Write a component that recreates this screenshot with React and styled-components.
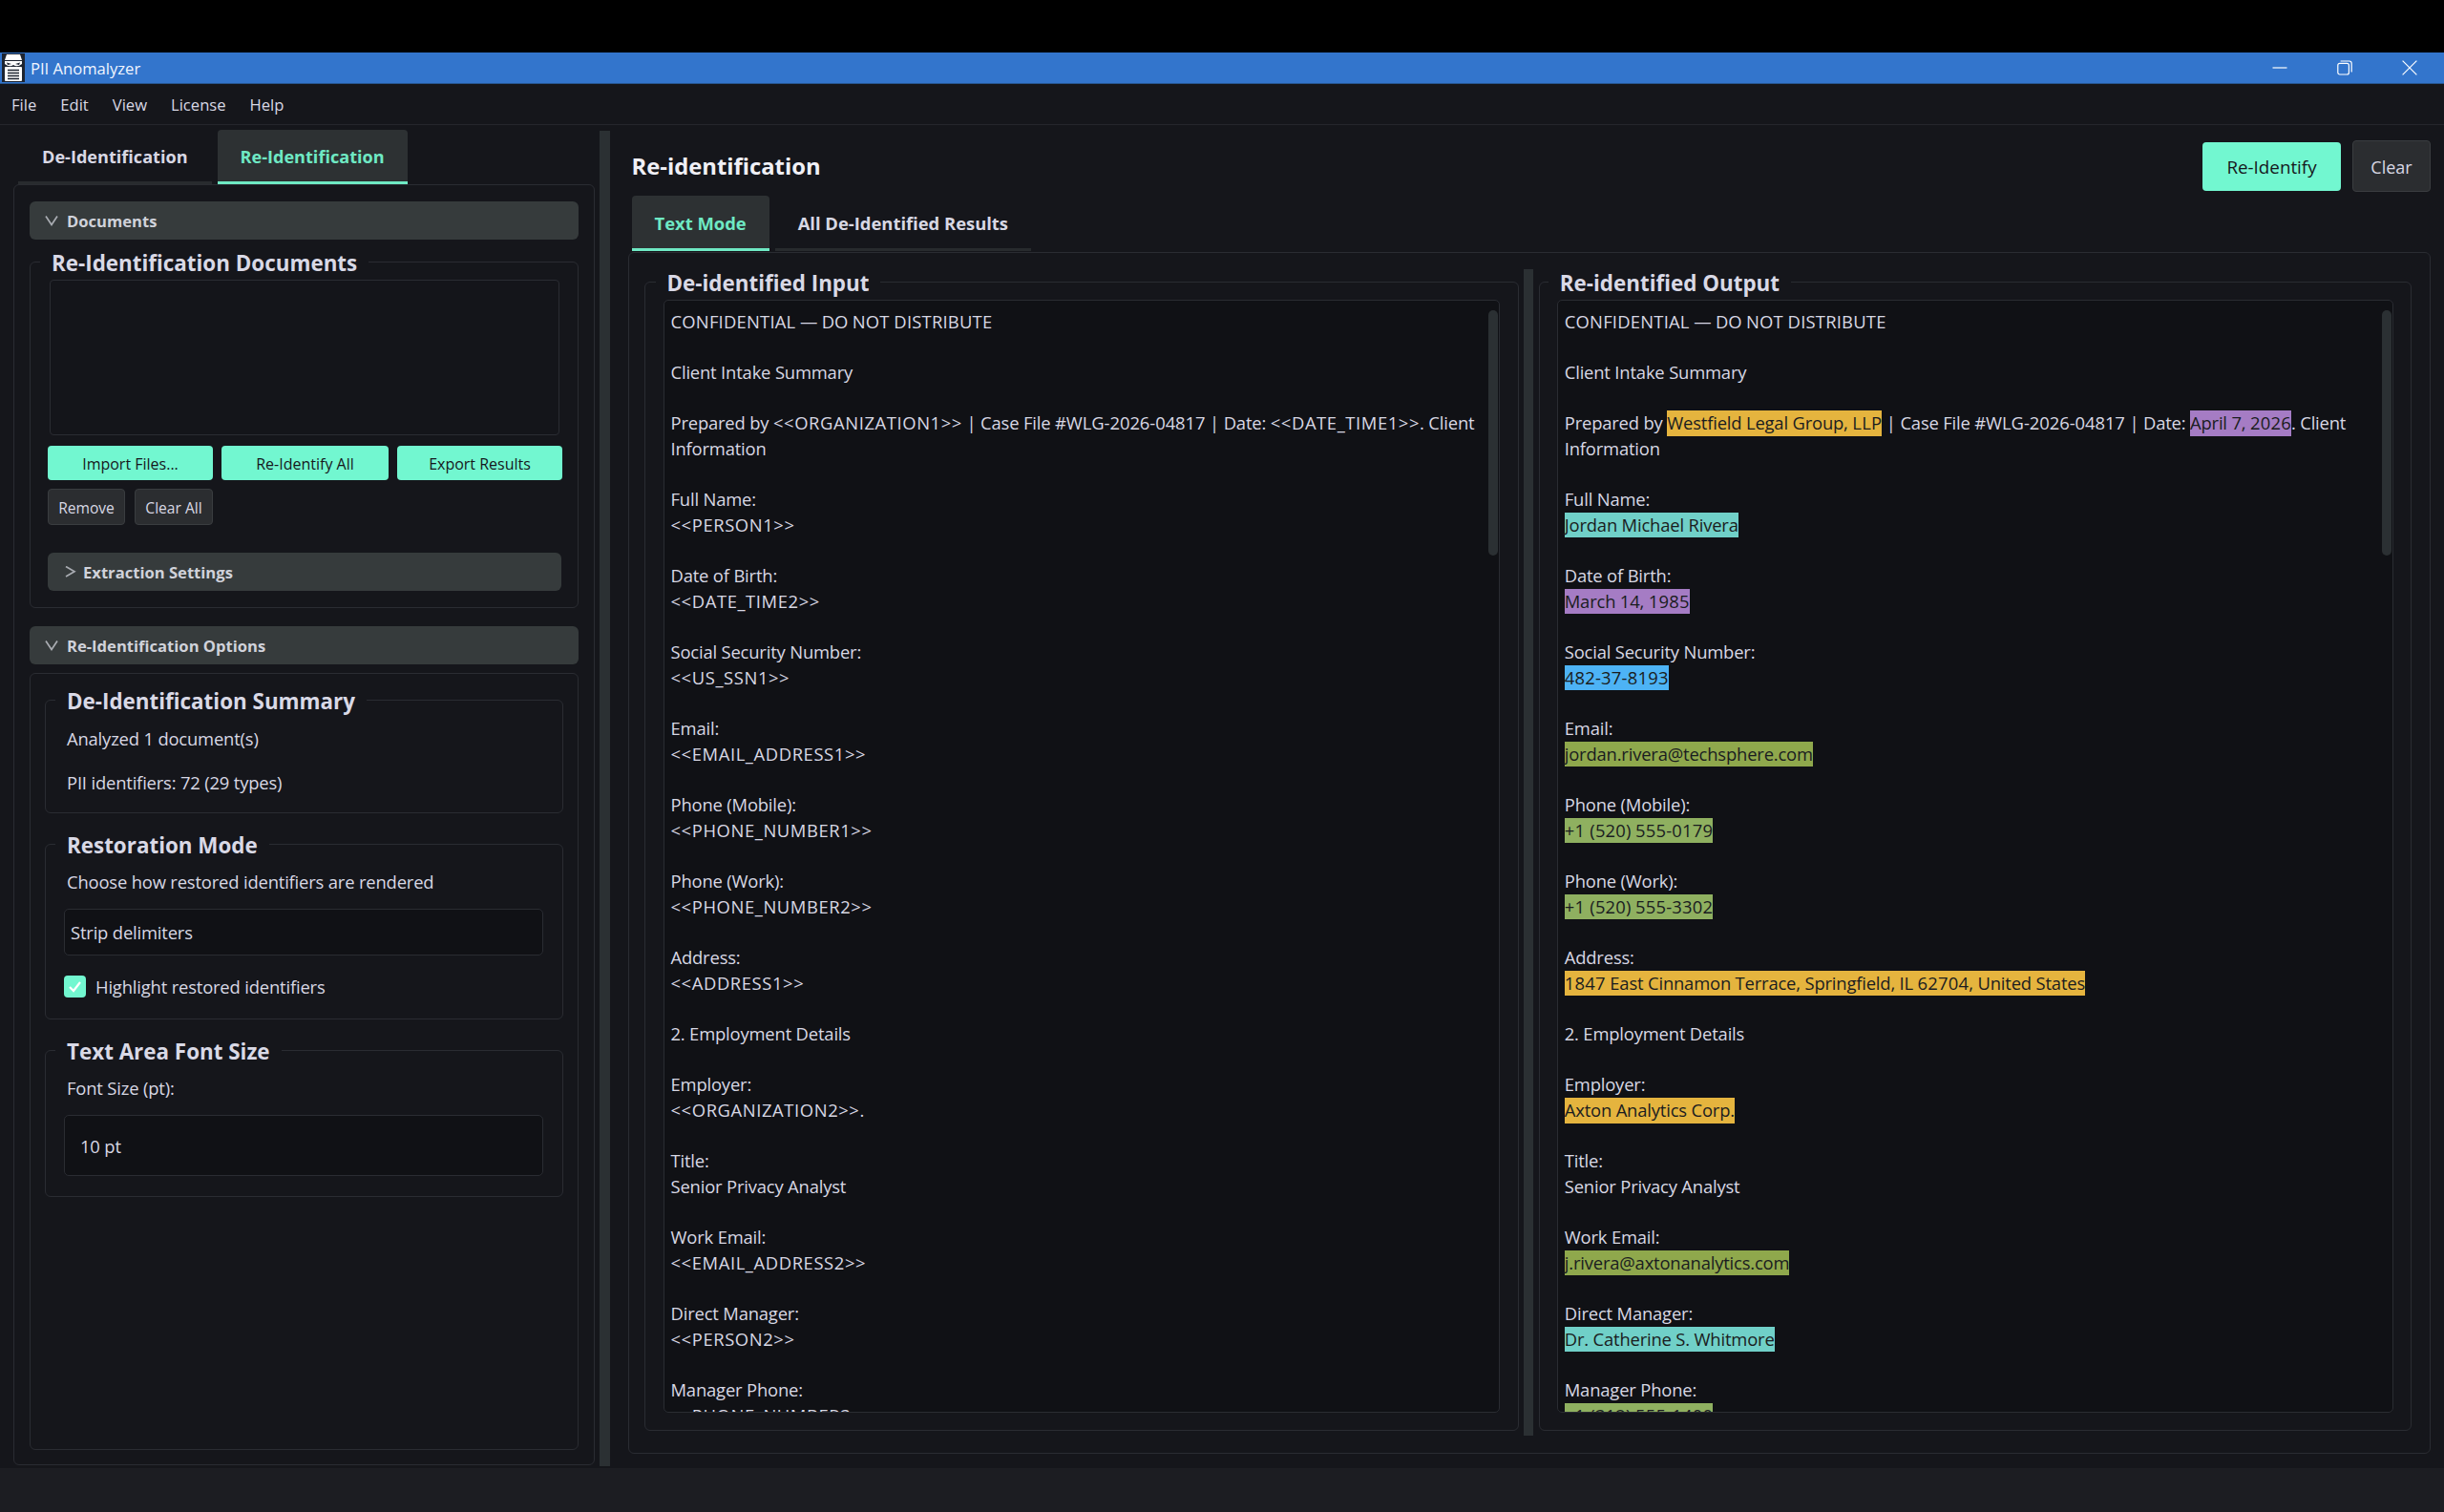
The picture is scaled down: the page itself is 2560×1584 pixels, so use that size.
import React from "react";
import styled, { createGlobalStyle } from "styled-components";

const FONT = `"Open Sans", "Noto Sans", "Liberation Sans", sans-serif`;
const TEXT = "#d8d8e4";
const LINE = "#2a2c32";
const ACCENT = "#72f7d0";
const BG = "#15161b";

const Global = createGlobalStyle`
  html, body { margin: 0; padding: 0; background: #000; }
  * { box-sizing: border-box; }
  body { font-family: ${FONT}; color: ${TEXT}; }
`;

const Page = styled.div`
  width: 2560px; height: 1584px; display: flex; flex-direction: column; background: #000; overflow: hidden;
`;
const TitleBar = styled.div`
  margin-top: 55px; height: 33px; flex: none; background: #3375cc; border-bottom: 1px solid #27558f;
  display: flex; align-items: center; color: #f0f5ff; font-size: 16.6px; padding-left: 2px;
`;
const AppName = styled.span` margin-left: 6px; padding-top: 1px; `;
const WinControls = styled.div` margin-left: auto; display: flex; padding-right: 2px; `;
const WinButton = styled.div` width: 68px; height: 32px; display: flex; align-items: center; justify-content: center; `;
const MenuBar = styled.div`
  height: 43px; flex: none; background: ${BG}; border-bottom: 1px solid #25262c;
  display: flex; align-items: center; gap: 25px; padding: 0 0 0 12px; font-size: 16.6px; color: ${TEXT};
`;
const Main = styled.div` flex: 1; min-height: 0; display: flex; background: ${BG}; `;
const StatusBar = styled.div` height: 46px; flex: none; background: #1c1d22; `;

const LeftCol = styled.div`
  width: 628px; flex: none; padding: 5px 5px 3px 14px; display: flex; flex-direction: column;
`;
const TabRow = styled.div` display: flex; gap: 6px; margin-left: ${p => p.$inset}px; flex: none; height: ${p => p.$h}px; margin-top: ${p => p.$top || 0}px; `;
const Tab = styled.div`
  padding: 2px ${p => p.$pad}px 0; display: flex; align-items: center; font-weight: 700; font-size: ${p => p.$size}px; white-space: nowrap;
  background: ${p => (p.$active ? "#2d3133" : "transparent")};
  color: ${p => (p.$active ? "#6fe9c4" : TEXT)};
  border-bottom: 3px solid ${p => (p.$active ? "#6fe9c4" : "#282b2e")};
  border-radius: 4px 4px 0 0;
`;
const Pane = styled.div`
  flex: 1; min-height: 0; border: 1px solid ${LINE}; border-radius: 6px; padding: 17px 16px 15px;
  display: flex; flex-direction: column;
`;
const SectionHeader = styled.div`
  flex: none; height: 40px; background: #363b3c; border-radius: 6px; display: flex; align-items: center;
  padding-left: ${p => p.$pad}px; gap: ${p => p.$gap}px; font-weight: 700; font-size: 16.6px; color: #d0d2da;
  margin-top: ${p => p.$top || 0}px;
`;
const Group = styled.div`
  border: 1px solid ${LINE}; border-radius: 6px; flex: none;
  margin-top: ${p => p.$top || 0}px;
  padding: 0 ${p => p.$right ?? 17}px ${p => p.$bottom ?? 17}px ${p => p.$left ?? 18}px;
`;
const GroupTitle = styled.div`
  width: fit-content; height: 32px; line-height: 32px; margin: -15px 0 0 ${p => p.$shift}px; padding: 0 12px;
  background: ${BG}; font-size: 22.4px; font-weight: 700; color: #d9d9e6; white-space: nowrap;
`;
const FileList = styled.div` height: 163px; margin: 1px 2px 0 2px; border: 1px solid ${LINE}; border-radius: 4px; background: #14151a; `;
const ActionGrid = styled.div` display: grid; grid-template-columns: 173px 175px 173px; gap: 9px; margin-top: 11px; `;
const AccentButton = styled.div`
  height: ${p => p.$h || 36}px; width: ${p => (p.$w ? `${p.$w}px` : "auto")}; background: ${ACCENT}; color: #16171c; border-radius: 4px; display: flex; align-items: center; justify-content: center;
  font-size: ${p => p.$size || 16}px; font-weight: 500; padding-top: 1px;
`;
const GhostRow = styled.div` display: flex; gap: 10px; margin-top: 9px; margin-bottom: 29px; `;
const GhostButton = styled.div`
  width: ${p => p.$w}px; height: ${p => p.$h || 38}px; background: #2b2d30; border: 1px solid #3a3d40; border-radius: 4px; padding-top: 1px;
  display: flex; align-items: center; justify-content: center; font-size: ${p => p.$size || 15.6}px; color: ${TEXT};
`;
const OptionsFrame = styled.div`
  flex: 1; margin-top: 9px; border: 1px solid ${LINE}; border-radius: 6px; padding: 27px 15px 0; display: flex; flex-direction: column;
`;
const BodyLine = styled.div`
  font-size: 18.4px; letter-spacing: -0.17px; line-height: 25px; height: 27px; margin: ${p => p.$top || 0}px 0 0 ${p => p.$left ?? 22}px; color: ${TEXT}; white-space: nowrap;
`;
const Combo = styled.div`
  height: ${p => p.$h}px; margin-top: ${p => p.$top}px; width: 502px; background: #101115; border: 1px solid ${LINE}; border-radius: 5px;
  display: flex; align-items: center; padding-left: ${p => p.$pad}px; padding-top: ${p => p.$raise || 0}px; font-size: 18.4px; letter-spacing: -0.17px; color: ${TEXT};
`;
const CheckRow = styled.div` display: flex; align-items: center; gap: 10px; margin-top: 21px; height: 22px; font-size: 18.4px; letter-spacing: -0.17px; `;
const CheckBox = styled.div`
  width: 23px; height: 23px; background: ${ACCENT}; border-radius: 4px; display: flex; align-items: center; justify-content: center;
`;

const Splitter = styled.div` width: 11px; flex: none; margin: 6px 0 2px; background: #2b3033; `;

const RightCol = styled.div`
  flex: 1; min-width: 0; padding: 16px 14px 15px 18.5px; display: flex; flex-direction: column;
`;
const HeadRow = styled.div` height: 54px; flex: none; display: flex; align-items: center; gap: 12px; padding-left: 4px; `;
const Heading = styled.div` font-size: 23.8px; font-weight: 700; color: #f0f0f6; margin-right: auto; `;
const Frame = styled.div`
  flex: 1; min-height: 0; margin-top: 1px; border: 1px solid ${LINE}; border-radius: 6px; padding: 17px 19px 18px 16px; display: flex;
`;
const EditorGroup = styled.div`
  flex: 1 1 0; min-width: 0; margin: 13px 0 5px; border: 1px solid ${LINE}; border-radius: 6px; padding: 0 ${p => p.$side}px 18px; display: flex; flex-direction: column;
`;
const Editor = styled.div`
  flex: 1; min-height: 0; margin-top: 1px; background: #101115; border: 1px solid ${LINE}; border-radius: 5px; display: flex; overflow: hidden;
`;
const EditorText = styled.div`
  flex: 1; min-width: 0; overflow: hidden; padding: 8.5px 0 0 ${p => p.$pad}px; font-size: 18.4px; letter-spacing: -0.17px; line-height: 26.67px; color: ${TEXT};
`;
const Line = styled.div` height: 26.67px; white-space: nowrap; `;
const Mark = styled.span`
  display: inline-block; height: 26.67px; line-height: 26.67px; color: #1a1c20; background: ${p => p.$bg};
`;
const Token = styled.span` letter-spacing: ${p => p.$ls}px; `;
const ScrollTrack = styled.div` width: 13px; flex: none; padding: 10px 1px 0 2px; `;
const ScrollThumb = styled.div` height: 257px; background: #2b3033; border-radius: 5px; `;
const InnerSplit = styled.div` width: 10px; flex: none; margin: 0 5.5px; background: #2b3033; `;

const Chevron = ({ dir }) => (
  <svg width="14" height="12" viewBox="0 0 14 12" fill="none" stroke="#a9acb2" strokeWidth="1.7">
    {dir === "down" ? <path d="M1 1.5 L7 10.5 L13 1.5" /> : <path d="M3 0.5 L12 5.8 L3 11" />}
  </svg>
);

const AppIcon = () => (
  <svg width="24" height="30" viewBox="0 0 24 30">
    <rect width="24" height="30" fill="#1d2430" />
    <path d="M5 1 H19 L21 7 H3 Z" fill="#fff" />
    <path d="M3 8 H21 V11 Q16 15 12 12 Q8 15 3 11 Z" fill="#fff" />
    <path d="M5 9.5 L10 11 L6 12 Z M19 9.5 L14 11 L18 12 Z" fill="#1d2430" />
    <rect x="3" y="14" width="18" height="15" rx="1" fill="#fff" />
    <path d="M6 17.5 H18 M6 20.5 H18 M6 23.5 H18 M6 26.5 H18" stroke="#1d2430" strokeWidth="1.6" />
  </svg>
);

const HL = {
  org: "#e5b43e", date: "#a57cc4", person: "#70d0c8", ssn: "#4db3f5", email: "#8fa84c", phone: "#8fb060",
};

const trackingOf = (part) => {
  if (part.startsWith("<<")) return 0.6;
  if (part.startsWith("#")) return -0.05;
  return 0.22;
};
const fit = (text) =>
  text.split(/(<<[^>]+>>|\+1 \(|[#A-Z0-9][A-Z0-9\-]{2,})/).map((part, i) =>
    i % 2 === 1 ? <Token key={i} $ls={trackingOf(part)}>{part}</Token> : part
  );

const INPUT = [
  "CONFIDENTIAL — DO NOT DISTRIBUTE", "", "Client Intake Summary", "",
  "Prepared by <<ORGANIZATION1>> | Case File #WLG-2026-04817 | Date: <<DATE_TIME1>>. Client", "Information", "",
  "Full Name:", "<<PERSON1>>", "", "Date of Birth:", "<<DATE_TIME2>>", "", "Social Security Number:", "<<US_SSN1>>", "",
  "Email:", "<<EMAIL_ADDRESS1>>", "", "Phone (Mobile):", "<<PHONE_NUMBER1>>", "", "Phone (Work):", "<<PHONE_NUMBER2>>", "",
  "Address:", "<<ADDRESS1>>", "", "2. Employment Details", "", "Employer:", "<<ORGANIZATION2>>.", "", "Title:", "Senior Privacy Analyst", "",
  "Work Email:", "<<EMAIL_ADDRESS2>>", "", "Direct Manager:", "<<PERSON2>>", "", "Manager Phone:", "<<PHONE_NUMBER3>>",
];

const OUTPUT = [
  "CONFIDENTIAL — DO NOT DISTRIBUTE", "", "Client Intake Summary", "",
  ["Prepared by ", { t: "Westfield Legal Group, LLP", k: "org" }, " | Case File #WLG-2026-04817 | Date: ", { t: "April 7, 2026", k: "date" }, ". Client"],
  "Information", "", "Full Name:", [{ t: "Jordan Michael Rivera", k: "person" }], "", "Date of Birth:", [{ t: "March 14, 1985", k: "date" }], "",
  "Social Security Number:", [{ t: "482-37-8193", k: "ssn" }], "", "Email:", [{ t: "jordan.rivera@techsphere.com", k: "email" }], "",
  "Phone (Mobile):", [{ t: "+1 (520) 555-0179", k: "phone" }], "", "Phone (Work):", [{ t: "+1 (520) 555-3302", k: "phone" }], "",
  "Address:", [{ t: "1847 East Cinnamon Terrace, Springfield, IL 62704, United States", k: "org" }], "", "2. Employment Details", "",
  "Employer:", [{ t: "Axton Analytics Corp.", k: "org" }], "", "Title:", "Senior Privacy Analyst", "",
  "Work Email:", [{ t: "j.rivera@axtonanalytics.com", k: "email" }], "", "Direct Manager:", [{ t: "Dr. Catherine S. Whitmore", k: "person" }], "",
  "Manager Phone:", [{ t: "+1 (312) 555-1400", k: "phone" }],
];

const renderLine = (line, i) => (
  <Line key={i}>
    {Array.isArray(line)
      ? line.map((seg, j) => (typeof seg === "string" ? <span key={j}>{fit(seg)}</span> : <Mark key={j} $bg={HL[seg.k]}>{fit(seg.t)}</Mark>))
      : fit(line)}
  </Line>
);

export default function App() {
  return (
    <Page>
      <Global />
      <TitleBar>
        <AppIcon />
        <AppName>PII Anomalyzer</AppName>
        <WinControls>
          <WinButton>
            <svg width="16" height="16" viewBox="0 0 16 16" stroke="#fff" strokeWidth="1.2"><path d="M0.5 8 H15.5" /></svg>
          </WinButton>
          <WinButton>
            <svg width="16" height="16" viewBox="0 0 16 16" fill="none" stroke="#fff" strokeWidth="1.2"><rect x="0.8" y="3.4" width="11.6" height="11.6" rx="2" /><path d="M3.6 1 H12.8 Q15.2 1 15.2 3.4 V12.4" /></svg>
          </WinButton>
          <WinButton>
            <svg width="16" height="16" viewBox="0 0 16 16" stroke="#fff" strokeWidth="1.2"><path d="M0.6 0.6 L15.4 15.4 M15.4 0.6 L0.6 15.4" /></svg>
          </WinButton>
        </WinControls>
      </TitleBar>
      <MenuBar>
        <span>File</span><span>Edit</span><span>View</span><span>License</span><span>Help</span>
      </MenuBar>
      <Main>
        <LeftCol>
          <TabRow $inset={5} $h={57}>
            <Tab $pad={25} $size={18.1}>De-Identification</Tab>
            <Tab $pad={24} $size={18.1} $active>Re-Identification</Tab>
          </TabRow>
          <Pane>
            <SectionHeader $pad={16} $gap={9}><Chevron dir="down" />Documents</SectionHeader>
            <Group $top={23}>
              <GroupTitle $shift={-8}>Re-Identification Documents</GroupTitle>
              <FileList />
              <ActionGrid>
                <AccentButton>Import Files...</AccentButton>
                <AccentButton>Re-Identify All</AccentButton>
                <AccentButton>Export Results</AccentButton>
              </ActionGrid>
              <GhostRow>
                <GhostButton $w={81}>Remove</GhostButton>
                <GhostButton $w={82}>Clear All</GhostButton>
              </GhostRow>
              <SectionHeader $pad={16} $gap={7}><Chevron dir="right" />Extraction Settings</SectionHeader>
            </Group>
            <SectionHeader $pad={16} $gap={9} $top={19}><Chevron dir="down" />Re-Identification Options</SectionHeader>
            <OptionsFrame>
              <Group $left={19} $right={21} $bottom={17}>
                <GroupTitle $shift={-9}>De-Identification Summary</GroupTitle>
                <BodyLine $top={10} $left={3}>Analyzed 1 document(s)</BodyLine>
                <BodyLine $top={19} $left={3}>PII identifiers: 72 (29 types)</BodyLine>
              </Group>
              <Group $top={32} $left={19} $right={21} $bottom={23}>
                <GroupTitle $shift={-9}>Restoration Mode</GroupTitle>
                <BodyLine $top={9} $left={3}>Choose how restored identifiers are rendered</BodyLine>
                <Combo $h={49} $top={14} $pad={6}>Strip delimiters</Combo>
                <CheckRow><CheckBox><svg width="15" height="13" viewBox="0 0 15 13" fill="none" stroke="#fff" strokeWidth="2.2"><path d="M2 7 L6 11 L13 2" /></svg></CheckBox>Highlight restored identifiers</CheckRow>
              </Group>
              <Group $top={32} $left={19} $right={21} $bottom={21}>
                <GroupTitle $shift={-9}>Text Area Font Size</GroupTitle>
                <BodyLine $top={9} $left={3}>Font Size (pt):</BodyLine>
                <Combo $h={64} $top={14} $pad={16} $raise={1}>10 pt</Combo>
              </Group>
            </OptionsFrame>
          </Pane>
        </LeftCol>
        <Splitter />
        <RightCol>
          <HeadRow>
            <Heading>Re-identification</Heading>
            <AccentButton $w={145} $h={51} $size={18.8}>Re-Identify</AccentButton>
            <GhostButton $w={82} $h={54} $size={18}>Clear</GhostButton>
          </HeadRow>
          <TabRow $inset={4} $h={58} $top={4}>
            <Tab $pad={24} $size={18.4} $active>Text Mode</Tab>
            <Tab $pad={24} $size={18.4}>All De-Identified Results</Tab>
          </TabRow>
          <Frame>
            <EditorGroup $side={19}>
              <GroupTitle $shift={-8}>De-identified Input</GroupTitle>
              <Editor>
                <EditorText $pad={7}>{INPUT.map(renderLine)}</EditorText>
                <ScrollTrack><ScrollThumb /></ScrollTrack>
              </Editor>
            </EditorGroup>
            <InnerSplit />
            <EditorGroup $side={18}>
              <GroupTitle $shift={-9}>Re-identified Output</GroupTitle>
              <Editor>
                <EditorText $pad={7}>{OUTPUT.map(renderLine)}</EditorText>
                <ScrollTrack><ScrollThumb /></ScrollTrack>
              </Editor>
            </EditorGroup>
          </Frame>
        </RightCol>
      </Main>
      <StatusBar />
    </Page>
  );
}
